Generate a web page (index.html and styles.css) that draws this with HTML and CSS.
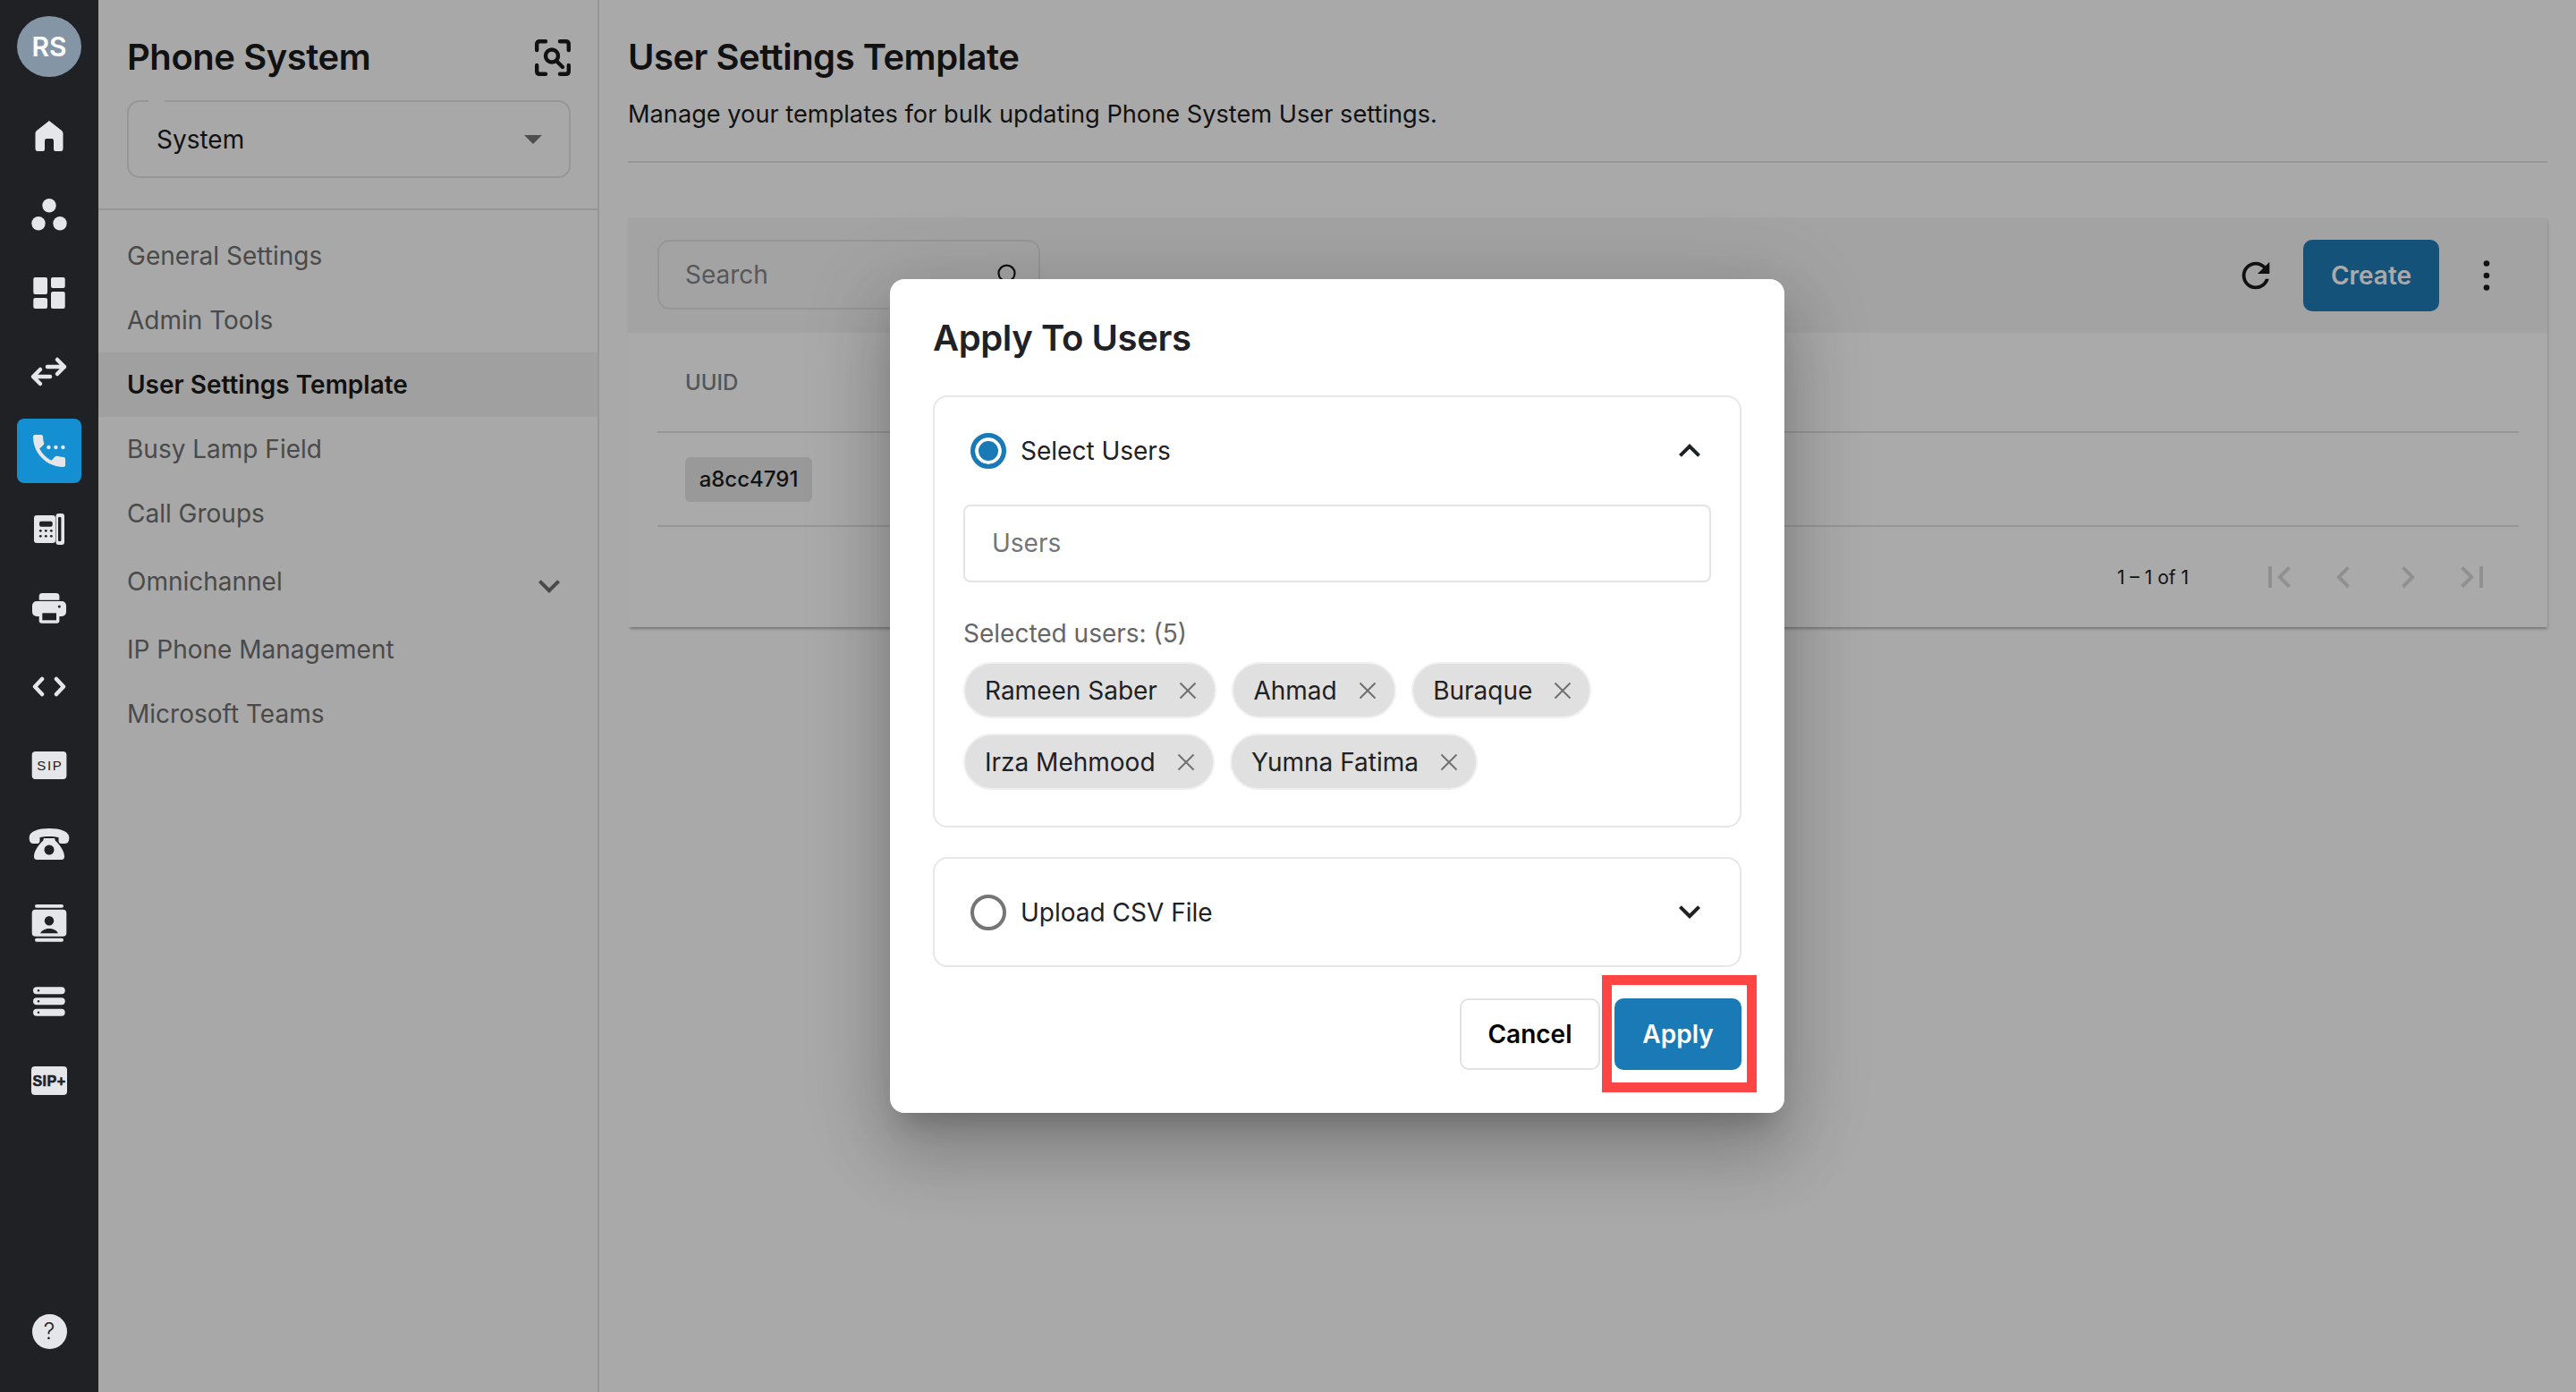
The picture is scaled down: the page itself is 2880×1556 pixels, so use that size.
FILE: index.html
```html
<!DOCTYPE html>
<html lang="en">
<head>
<meta charset="utf-8">
<title>User Settings Template</title>
<link rel="stylesheet" href="styles.css">
</head>
<body>
<div class="app">
  <aside class="rail">
    <div class="avatar">RS</div>
    <nav class="rail-nav">
      <div class="rail-item"><svg class="ic" viewBox="0 0 48 48"><path d="M24 7 38 18Q39.5 19.5 39.5 21V38Q39.5 41 37 41H31Q29 41 29 39V30Q29 27 27 27H21Q19 27 19 30V39Q19 41 17 41H11Q8.5 41 8.5 38V21Q8.5 19.500 10 18Z"/></svg></div>
      <div class="rail-item"><svg class="ic" viewBox="0 0 48 48"><circle cx="24" cy="13.700" r="7.700"/><circle cx="12" cy="33.700" r="7.700"/><circle cx="36" cy="33.700" r="7.700"/></svg></div>
      <div class="rail-item"><svg class="ic" viewBox="0 0 48 48"><rect x="6.300" y="6" width="15.700" height="19" rx="2"/><rect x="26" y="6" width="15.700" height="12" rx="2"/><rect x="6.300" y="29" width="15.700" height="12" rx="2"/><rect x="26" y="22" width="15.700" height="19" rx="2"/></svg></div>
      <div class="rail-item"><svg class="ic ic-stroke" viewBox="0 0 48 48"><path d="M22 18H41M33 10 41 18 33 26M25 29H6.500M14 21 6 29 14 37"/></svg></div>
      <div class="rail-item rail-active"><svg class="ic" viewBox="0 0 24 24"><path d="M20 15.500c-1.250 0-2.450-.2-3.570-.57-.35-.11-.74-.03-1.020.24l-2.200 2.200c-2.830-1.440-5.150-3.750-6.590-6.580l2.200-2.210c.28-.27.36-.66.25-1.010C8.700 6.450 8.500 5.250 8.500 4c0-.55-.45-1-1-1H4c-.55 0-1 .45-1 1 0 9.390 7.610 17 17 17 .55 0 1-.45 1-1v-3.500c0-.55-.45-1-1-1z"/><circle cx="11.700" cy="10" r="1.100"/><circle cx="15.700" cy="10" r="1.100"/><circle cx="19.700" cy="10" r="1.100"/></svg></div>
      <div class="rail-item"><svg class="ic" viewBox="0 0 48 48"><rect x="7" y="8" width="24" height="31" rx="3"/><rect x="31.500" y="6" width="9.500" height="35" rx="3"/><g class="ic-cut"><rect x="34" y="10" width="3.400" height="27" rx="1"/><rect x="13" y="14.700" width="14.700" height="6" rx="2"/><circle cx="14.300" cy="25.300" r="1.400"/><circle cx="20.300" cy="25.300" r="1.400"/><circle cx="26.300" cy="25.300" r="1.400"/><circle cx="14.300" cy="31.300" r="1.400"/><circle cx="20.300" cy="31.300" r="1.400"/><circle cx="26.300" cy="31.300" r="1.400"/></g></svg></div>
      <div class="rail-item"><svg class="ic" viewBox="0 0 48 48"><rect x="12.700" y="7" width="22.700" height="14" rx="3.500"/><rect x="5" y="16" width="38" height="17" rx="5"/><rect x="12.700" y="26" width="22.700" height="14.700" rx="3"/><g class="ic-cut"><rect x="16.300" y="29.300" width="15.700" height="8"/><circle cx="35.300" cy="22" r="1.500"/><rect x="12" y="14.800" width="24" height="1.200"/></g></svg></div>
      <div class="rail-item"><svg class="ic ic-stroke" viewBox="0 0 48 48"><path d="M16 15 8 23.500 16 32M32 15 40 23.500 32 32"/></svg></div>
      <div class="rail-item"><svg class="ic" viewBox="0 0 48 48"><rect x="4.700" y="8" width="38.700" height="31" rx="4"/><text class="sip" x="24.800" y="29">SIP</text></svg></div>
      <div class="rail-item"><svg class="ic" viewBox="0 0 48 48"><path d="M1.700 16C2 9 12 6 24 6 36 6 46 9 46.300 16 46.500 20 45 23 42 23H37.500C35 23 34.500 21 34.500 19V16C30 14.500 18 14.500 13.500 16V19C13.500 21 13 23 10.500 23H6C3 23 1.500 20 1.700 16Z"/><path d="M18 17H30L31 20C34 22 41 31 41 37 41 40 40 41 37 41H11C8 41 7 40 7 37 7 31 14 22 17 20Z"/><circle class="ic-cut" cx="24" cy="30" r="5.500"/></svg></div>
      <div class="rail-item"><svg class="ic" viewBox="0 0 48 48"><rect x="8" y="3" width="32" height="3.700" rx="1.800"/><rect x="4.700" y="8.700" width="38.600" height="30" rx="4"/><rect x="8" y="40.700" width="32" height="4" rx="2"/><g class="ic-cut"><circle cx="24" cy="21.300" r="5.200"/><path d="M14 35.300C16 31.500 20 30 24 30 28 30 32 31.500 34 35.300Z"/></g></svg></div>
      <div class="rail-item"><svg class="ic" viewBox="0 0 48 48"><rect x="6" y="7.300" width="35.700" height="8" rx="4"/><rect x="6" y="19.300" width="35.700" height="8" rx="4"/><rect x="6" y="31.700" width="35.700" height="8" rx="4"/><g class="ic-cut"><circle cx="12" cy="11.300" r="1.200"/><circle cx="12" cy="23.300" r="1.200"/><circle cx="12" cy="35.700" r="1.200"/></g></svg></div>
      <div class="rail-item"><svg class="ic" viewBox="0 0 48 48"><rect x="4" y="8" width="40" height="32" rx="4"/><text class="sip sip-plus" x="24" y="29.800">SIP+</text></svg></div>
    </nav>
    <div class="help">?</div>
  </aside>

  <aside class="sidebar">
    <div class="side-head">
      <div class="side-title-row">
        <h2 class="side-title">Phone System</h2>
        <svg class="scan" viewBox="0 0 40 41"><path d="M2.200 12V5.500Q2.200 2.200 5.500 2.200H12M28 2.200H34.500Q37.800 2.200 37.800 5.500V12M37.800 29V35.500Q37.800 38.800 34.500 38.800H28M12 38.800H5.500Q2.200 38.800 2.200 35.500V29"/><circle cx="19" cy="18.500" r="7"/><path d="M24 24 31 31"/></svg>
      </div>
      <div class="select">
        <span class="select-notch"></span>
        <span>System</span>
        <span class="select-arrow"></span>
      </div>
    </div>
    <nav class="side-nav">
      <a class="side-link">General Settings</a>
      <a class="side-link">Admin Tools</a>
      <a class="side-link side-active">User Settings Template</a>
      <a class="side-link">Busy Lamp Field</a>
      <a class="side-link">Call Groups</a>
      <a class="side-link side-omni">Omnichannel<svg class="chev chev-nav" viewBox="0 0 24 24"><path d="M16.590 8.590 12 13.170 7.410 8.590 6 10l6 6 6-6z"/></svg></a>
      <a class="side-link">IP Phone Management</a>
      <a class="side-link">Microsoft Teams</a>
    </nav>
  </aside>

  <main class="main">
    <header class="page-head">
      <h1 class="page-title">User Settings Template</h1>
      <p class="page-sub">Manage your templates for bulk updating Phone System User settings.</p>
    </header>
    <section class="card">
      <div class="toolbar">
        <div class="search">
          <span>Search</span>
          <svg class="search-ic" viewBox="0 0 24 24"><circle cx="11" cy="11" r="6"/><path d="M15.500 15.500 20 20"/></svg>
        </div>
        <svg class="refresh" viewBox="0 0 24 24"><path d="M17.650 6.350C16.200 4.900 14.210 4 12 4c-4.420 0-7.990 3.580-7.990 8s3.570 8 7.990 8c3.730 0 6.840-2.550 7.730-6h-2.080c-.82 2.330-3.040 4-5.650 4-3.310 0-6-2.690-6-6s2.690-6 6-6c1.660 0 3.140.69 4.220 1.780L13 11h7V4l-2.350 2.350z"/></svg>
        <button class="create">Create</button>
        <svg class="kebab" viewBox="0 0 48 48"><circle cx="24" cy="10.500" r="3.300"/><circle cx="24" cy="24" r="3.300"/><circle cx="24" cy="37.500" r="3.300"/></svg>
      </div>
      <div class="table">
        <div class="thead">UUID</div>
        <div class="trow"><span class="uuid">a8cc4791</span></div>
      </div>
      <div class="pager">
        <span class="pager-text">1 – 1 of 1</span>
        <div class="pager-btns">
          <svg class="pg" viewBox="0 0 24 24"><path d="M18.410 16.590 13.820 12l4.590-4.590L17 6l-6 6 6 6zM6 6h2v12H6z"/></svg>
          <svg class="pg" viewBox="0 0 24 24"><path d="M15.410 16.590 10.830 12l4.580-4.590L14 6l-6 6 6 6z"/></svg>
          <svg class="pg" viewBox="0 0 24 24"><path d="M8.590 16.590 13.170 12 8.590 7.410 10 6l6 6-6 6z"/></svg>
          <svg class="pg" viewBox="0 0 24 24"><path d="M5.590 7.410 10.180 12l-4.590 4.590L7 18l6-6-6-6zM16 6h2v12h-2z"/></svg>
        </div>
      </div>
    </section>
  </main>

  <div class="overlay">
    <div class="modal">
      <h2 class="modal-title">Apply To Users</h2>
      <section class="acc acc-open">
        <div class="acc-head">
          <span class="radio radio-on"></span>
          <span class="acc-label">Select Users</span>
          <svg class="chev chev-up" viewBox="0 0 24 24"><path d="M16.590 8.590 12 13.170 7.410 8.590 6 10l6 6 6-6z"/></svg>
        </div>
        <div class="acc-body">
          <div class="field">Users</div>
          <div class="sel-label">Selected users: (5)</div>
          <div class="chips">
            <span class="chip">Rameen Saber<svg class="x" viewBox="0 0 20 20"><path d="M1.500 1.500 18.500 18.500M18.500 1.500 1.500 18.500"/></svg></span>
            <span class="chip">Ahmad<svg class="x" viewBox="0 0 20 20"><path d="M1.500 1.500 18.500 18.500M18.500 1.500 1.500 18.500"/></svg></span>
            <span class="chip">Buraque<svg class="x" viewBox="0 0 20 20"><path d="M1.500 1.500 18.500 18.500M18.500 1.500 1.500 18.500"/></svg></span>
            <span class="chip">Irza Mehmood<svg class="x" viewBox="0 0 20 20"><path d="M1.500 1.500 18.500 18.500M18.500 1.500 1.500 18.500"/></svg></span>
            <span class="chip">Yumna Fatima<svg class="x" viewBox="0 0 20 20"><path d="M1.500 1.500 18.500 18.500M18.500 1.500 1.500 18.500"/></svg></span>
          </div>
        </div>
      </section>
      <section class="acc acc-closed">
        <div class="acc-head acc-head-closed">
          <span class="radio"></span>
          <span class="acc-label">Upload CSV File</span>
          <svg class="chev chev-down" viewBox="0 0 24 24"><path d="M16.590 8.590 12 13.170 7.410 8.590 6 10l6 6 6-6z"/></svg>
        </div>
      </section>
      <div class="actions">
        <button class="btn btn-cancel">Cancel</button>
        <div class="apply-wrap">
          <button class="btn btn-apply">Apply</button>
          <span class="highlight"></span>
        </div>
      </div>
    </div>
  </div>
</div>
</body>
</html>
```
FILE: styles.css
```css
* { box-sizing: border-box; }
html, body { margin: 0; padding: 0; }
body { font-family: Inter, "Noto Sans", sans-serif; font-size: 28px; color: #1a1a1a; background: #fefefe; }
h1, h2, p { margin: 0; }
button { font-family: inherit; border: 0; padding: 0; }

.app { position: relative; display: flex; width: 2880px; height: 1556px; overflow: hidden; }

/* rail */
.rail { position: relative; z-index: 2; flex: 0 0 110px; display: flex; flex-direction: column; align-items: center; background: #1f2124; padding: 18px 0 24px; }
.avatar { width: 72px; height: 68px; border-radius: 50%; background: #8496a6; color: #fff; font-size: 30px; font-weight: 600; display: flex; align-items: center; justify-content: center; }
.rail-nav { margin-top: 22px; display: flex; flex-direction: column; }
.rail-item { width: 72px; height: 88px; display: flex; align-items: center; justify-content: center; }
.rail-active { height: 72px; margin: 8px 0; background: #1490d2; border-radius: 8px; }
.ic { width: 48px; height: 48px; fill: #e4e6ea; display: block; }
.ic-stroke { fill: none; stroke: #e4e6ea; stroke-width: 4.500; stroke-linecap: round; stroke-linejoin: round; }
.ic-cut { fill: #1f2124; }
.sip { fill: #1f2124; font-family: "Liberation Sans", sans-serif; font-size: 15px; font-weight: 400; letter-spacing: 1.600px; text-anchor: middle; }
.sip-plus { font-size: 16px; font-weight: 700; letter-spacing: .5px; stroke: #1f2124; stroke-width: .6px; }
.help { margin-top: auto; margin-bottom: 24px; width: 39px; height: 39px; border-radius: 50%; background: #e4e6ea; color: #1f2124; font-size: 25px; font-weight: 300; line-height: 39px; text-align: center; }

/* sidebar */
.sidebar { flex: 0 0 560px; background: #fcfcfc; border-right: 2px solid #e2e2e2; }
.side-head { padding: 16px 30px 34px 32px; border-bottom: 2px solid #e2e2e2; }
.side-title-row { height: 96px; display: flex; align-items: center; justify-content: space-between; }
.side-title { font-size: 40px; font-weight: 600; letter-spacing: -.45px; margin-top: -1px; }
.scan { width: 40px; height: 41px; fill: none; stroke: #1a1a1a; stroke-width: 4.400; stroke-linecap: round; }
.select { position: relative; height: 87px; border: 2px solid #e2e2e2; border-radius: 14px; padding: 0 32px 0 31px; display: flex; align-items: center; justify-content: space-between; color: #1a1a1a; }
.select-notch { position: absolute; top: -2px; left: 22px; width: 18px; height: 2px; background: #fcfcfc; }
.select-arrow { width: 0; height: 0; border-left: 10px solid transparent; border-right: 10px solid transparent; border-top: 10px solid #757575; margin-right: -2px; }
.side-nav { padding-top: 15px; display: flex; flex-direction: column; }
.side-link { height: 72px; padding-left: 32px; display: flex; align-items: center; color: #6f6f6f; }
.side-active { color: #1a1a1a; font-weight: 600; background: #f0f0f0; }
.side-omni { height: 80px; justify-content: space-between; padding-right: 30px; }
.chev { width: 48px; height: 48px; fill: #1f2124; flex: none; }
.chev-nav { fill: #6f6f6f; margin-top: 10px; }

/* main */
.main { flex: 1; padding: 0 32px; min-width: 0; }
.page-head { padding: 40px 0 32px; border-bottom: 2px solid #e2e2e2; }
.page-title { font-size: 40px; line-height: 48px; font-weight: 600; letter-spacing: -.5px; }
.page-sub { margin-top: 20px; line-height: 40px; font-size: 27.200px; }
.card { margin-top: 61px; background: #fff; box-shadow: 1px 3px 3px -1px rgba(0,0,0,.3); }
.toolbar { height: 129px; background: #f5f5f5; display: flex; align-items: center; padding: 0 44px 0 33px; }
.search { width: 428px; height: 78px; border: 2px solid #e2e2e2; border-radius: 14px; padding: 0 16px 0 29px; display: flex; align-items: center; justify-content: space-between; color: #858585; margin-top: -1px; }
.search-ic { width: 36px; height: 36px; fill: none; stroke: #1a1a1a; stroke-width: 1.500; }
.refresh { width: 46px; height: 46px; margin-left: auto; fill: #1a1a1a; }
.create { width: 152px; height: 80px; margin-left: 30px; border-radius: 10px; background: #207bb7; color: #fff; font-size: 28px; font-weight: 600; }
.kebab { width: 48px; height: 48px; margin-left: 29px; fill: #1a1a1a; }
.table { margin: 0 32px 0 33px; }
.thead { height: 112px; padding-left: 31px; display: flex; align-items: center; border-bottom: 2px solid #e2e2e2; font-size: 24px; font-weight: 500; color: #808080; }
.trow { height: 105px; padding-left: 31px; display: flex; align-items: center; border-bottom: 2px solid #e2e2e2; }
.uuid { width: 142px; height: 50px; background: #e6e6e6; border-radius: 6px; font-size: 24px; font-weight: 500; display: flex; align-items: center; justify-content: center; }
.pager { height: 112px; display: flex; align-items: center; justify-content: flex-end; padding-right: 48px; }
.pager-text { font-size: 21px; }
.pager-btns { display: flex; margin-left: 65px; }
.pg { width: 48px; height: 48px; margin: 0 12px; fill: #d8d8d8; }

/* modal */
.overlay { position: absolute; z-index: 1; top: 0; right: 0; bottom: 0; left: 110px; background: rgba(0,0,0,.333); display: flex; align-items: center; justify-content: center; }
.modal { width: 1000px; height: 932px; background: #fff; border-radius: 16px; padding: 42px 48px 0; box-shadow: 0 22px 30px -14px rgba(0,0,0,.2), 0 48px 76px 6px rgba(0,0,0,.14), 0 18px 92px 16px rgba(0,0,0,.12); }
.modal-title { font-size: 40px; line-height: 48px; font-weight: 600; letter-spacing: -.4px; color: #1f2124; margin-bottom: 40px; }
.acc { border: 2px solid #e7e7ea; border-radius: 16px; }
.acc-open { height: 483px; }
.acc-closed { height: 123px; margin-top: 33px; display: flex; align-items: center; }
.acc-head { height: 120px; display: flex; align-items: center; padding: 0 32px 0 40px; flex: 1; }
.acc-label { margin-left: 16px; flex: 1; color: #1f2124; }
.radio { width: 40px; height: 40px; border: 4px solid #757575; border-radius: 50%; flex: none; }
.radio-on { border: 5px solid #1a7ab5; background: #1a7ab5; box-shadow: inset 0 0 0 4px #fff; }
.chev-up { transform: rotate(180deg); }
.chev-down { margin-top: -2px; }
.acc-body { padding: 0 32px; }
.field { height: 87px; border: 2px solid #e4e4e7; border-radius: 8px; padding: 0 0 2px 30px; display: flex; align-items: center; color: #757575; }
.sel-label { margin-top: 39px; line-height: 36px; color: #666; }
.chips { margin-top: 14px; display: flex; flex-wrap: wrap; gap: 17px 17.500px; }
.chip { height: 63px; border: 2px solid #f0f0f0; border-radius: 32px; background: #e0e0e0; padding: 0 20px 0 22px; display: flex; align-items: center; color: #1f2124; }
.x { width: 20px; height: 20px; margin-left: 24px; fill: none; stroke: #707070; stroke-width: 2; }
.actions { margin-top: 35px; display: flex; justify-content: flex-end; gap: 16px; }
.btn { height: 80px; border-radius: 10px; font-size: 28px; font-weight: 600; display: block; }
.btn-cancel { width: 157px; background: #fff; color: #000; border: 2px solid #e2e2e5; }
.btn-apply { width: 142px; background: #1a7ab5; color: #fff; }
.apply-wrap { position: relative; }
.highlight { position: absolute; top: -26px; right: -17px; bottom: -25px; left: -14px; border: 11px solid #ff4444; pointer-events: none; }
```
